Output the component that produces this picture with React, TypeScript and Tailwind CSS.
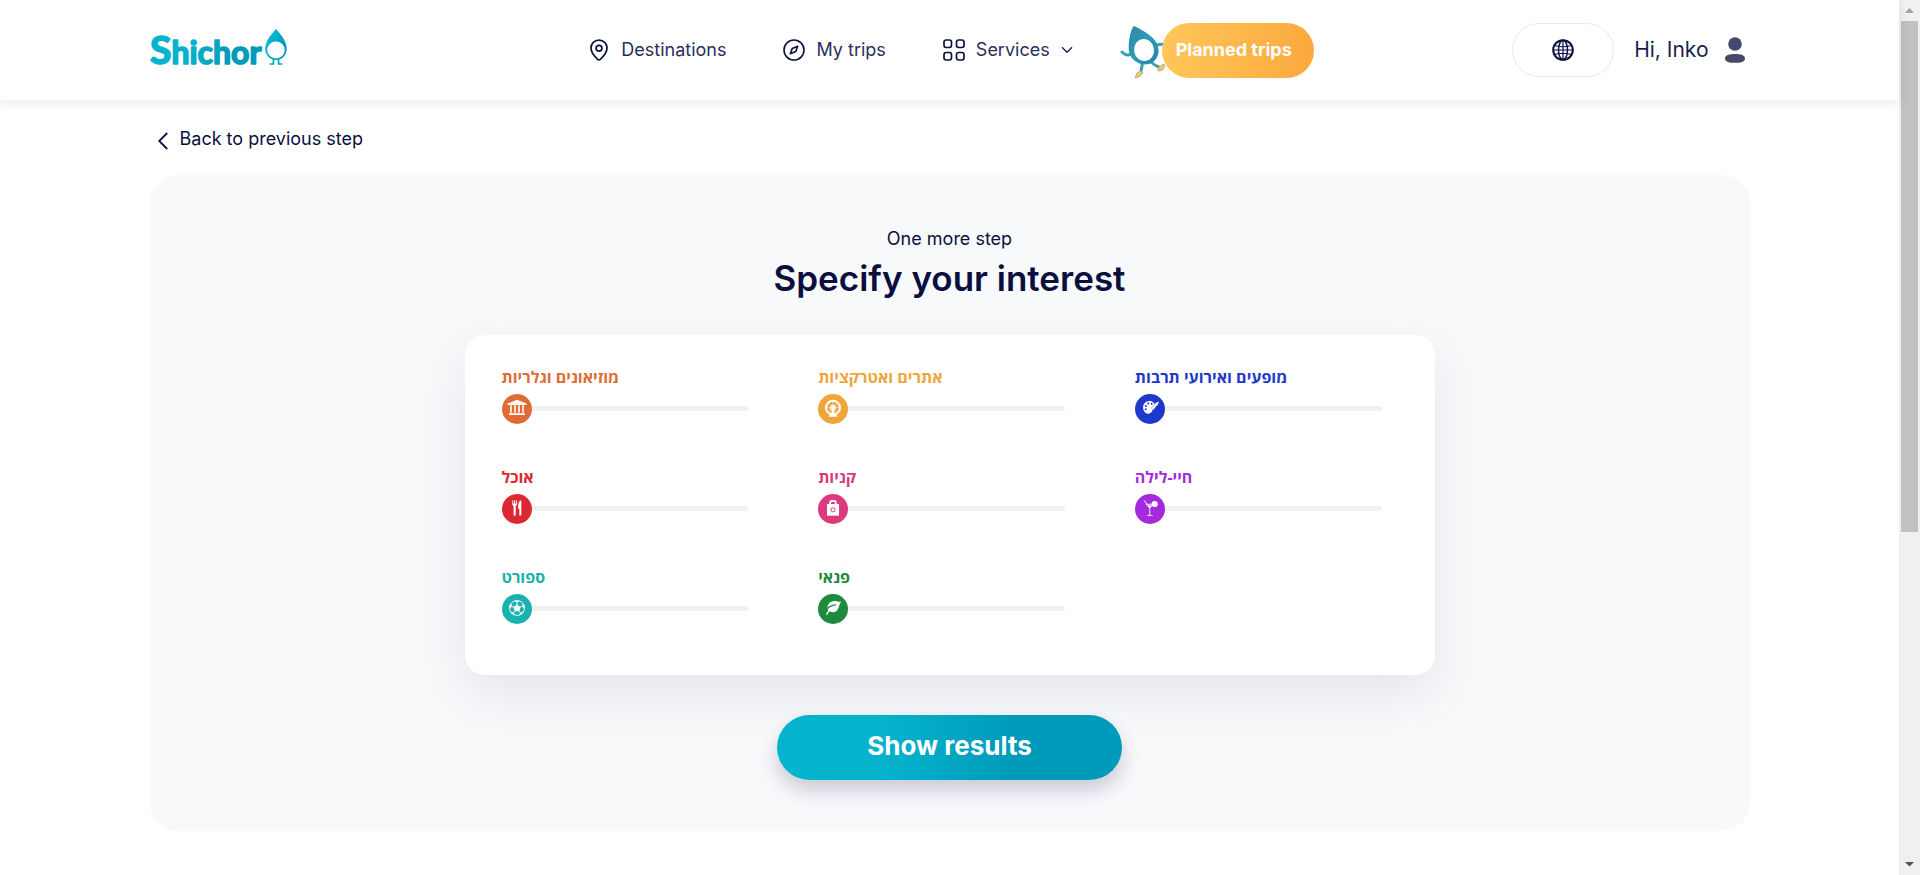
import { useState } from "react";
import type { ReactNode } from "react";

type Interest = {
  id: string;
  label: string;
  text: string;
  thumb: string;
  icon: ReactNode;
};

const interests: Interest[] = [
  {
    id: "museums",
    label: "מוזיאונים וגלריות",
    text: "text-[#df6c34]",
    thumb: "[&::-webkit-slider-thumb]:bg-[#df6c34] [&::-moz-range-thumb]:bg-[#df6c34]",
    icon: (
      <g fill="#fff">
        <path d="M15 6.7 24.4 10.6V11.9H5.6V10.6Z" />
        <path d="M8.2 12.2h1.5v7.6H8.2zM12.2 12.2h1.6v7.6h-1.6zM16.2 12.2h1.6v7.6h-1.6zM20.3 12.2h1.5v7.6h-1.5zM7 20.3h16V22H7z" />
      </g>
    ),
  },
  {
    id: "attractions",
    label: "אתרים ואטרקציות",
    text: "text-[#efa53a]",
    thumb: "[&::-webkit-slider-thumb]:bg-[#efa53a] [&::-moz-range-thumb]:bg-[#efa53a]",
    icon: (
      <g fill="none" stroke="#fff">
        <circle cx="15" cy="14.7" r="7" strokeWidth="1.9" />
        <path d="M15 8v13.4M8.3 14.7h13.4M10.3 10l9.4 9.4M19.7 10l-9.4 9.4" strokeWidth=".6" />
        <circle cx="15" cy="14.7" r="2.7" fill="#fff" stroke="none" />
        <path d="M14 16h2l1 5.5 2.3 1.2v1.1h-8.6v-1.1L13 21.500Z" fill="#fff" stroke="none" />
      </g>
    ),
  },
  {
    id: "culture",
    label: "מופעים ואירועי תרבות",
    text: "text-[#1f38cc]",
    thumb: "[&::-webkit-slider-thumb]:bg-[#1f38cc] [&::-moz-range-thumb]:bg-[#1f38cc]",
    icon: (
      <g>
        <path
          d="M14.500 8c-3.800 0-6.400 2.900-6.400 6.500 0 3.500 2.400 6.300 5.500 6.300 1.800 0 1.100-2 2-3 1.200-1.200 4.800-.2 4.800-3.600C20.400 10.500 18 8 14.500 8Z"
          fill="#fff"
        />
        <g fill="#1f38cc">
          <circle cx="10.700" cy="16.200" r="1" />
          <circle cx="10.800" cy="12.900" r="1" />
          <circle cx="13.300" cy="10.600" r="1" />
          <circle cx="16.700" cy="10.800" r="1" />
        </g>
        <path d="M23 9.700 17.500 16" stroke="#1f38cc" strokeWidth="3" fill="none" />
        <path d="M24 8.600 21 9.800 16.300 15.400 18 16.800 23 11.300Z" fill="#fff" />
        <path d="M15.800 16.200 17.500 17.600C17.200 19.200 16 20 14.600 20.100 15.400 18.800 14.800 17.200 15.800 16.200Z" fill="#fff" />
      </g>
    ),
  },
  {
    id: "food",
    label: "אוכל",
    text: "text-[#da2932]",
    thumb: "[&::-webkit-slider-thumb]:bg-[#da2932] [&::-moz-range-thumb]:bg-[#da2932]",
    icon: (
      <g fill="#fff">
        <path d="M10.300 7.300h.9v3.200h.9V7.300h1v3.200h.9V7.300h.9v3.900c0 .9-.5 1.500-1.200 1.800v9.600h-2.100V13c-.8-.3-1.300-.9-1.300-1.800Z" />
        <path d="M19.300 7.300v15.300h-2v-6.900h-1.100c-.3-3.500.2-7.900 3.100-8.400Z" />
      </g>
    ),
  },
  {
    id: "shopping",
    label: "קניות",
    text: "text-[#dc397e]",
    thumb: "[&::-webkit-slider-thumb]:bg-[#dc397e] [&::-moz-range-thumb]:bg-[#dc397e]",
    icon: (
      <g>
        <path d="M9 11h12v11.700H9Z" fill="#fff" />
        <path d="M12.200 11.500V9.600c0-1 .6-1.600 1.600-1.600h2.400c1 0 1.600.6 1.600 1.600v1.900" fill="none" stroke="#fff" strokeWidth="1.800" />
        <rect x="13.100" y="14.900" width="3.800" height="3.800" rx="1.200" fill="none" stroke="#dc397e" />
      </g>
    ),
  },
  {
    id: "nightlife",
    label: "חיי-לילה",
    text: "text-[#a52add]",
    thumb: "[&::-webkit-slider-thumb]:bg-[#a52add] [&::-moz-range-thumb]:bg-[#a52add]",
    icon: (
      <g>
        <circle cx="19.700" cy="11" r="3.100" fill="#fff" />
        <path d="M9.200 7.500l2.600 3.300" stroke="#fff" strokeWidth="1" />
        <path d="M10.200 10.700h8.500l-3.500 4.600v6.500l2.800.5v.5h-6.300v-.5l2.700-.5v-6.500Z" fill="#fff" />
        <path d="M12 12h4.800" stroke="#a52add" strokeWidth=".7" />
      </g>
    ),
  },
  {
    id: "sport",
    label: "ספורט",
    text: "text-[#1ab2ae]",
    thumb: "[&::-webkit-slider-thumb]:bg-[#1ab2ae] [&::-moz-range-thumb]:bg-[#1ab2ae]",
    icon: (
      <g fill="none" stroke="#fff">
        <circle cx="15" cy="15" r="7.500" strokeWidth=".9" />
        <path d="M15 12l3 2.200-1.100 3.500h-3.800L12 14.200Z" fill="#fff" />
        <path d="M15 12V9.700M18 14.200l2.200-.8M16.900 17.700l1.500 2M13.100 17.700l-1.500 2M12 14.200l-2.200-.8" strokeWidth="1" />
        <path
          d="M12.700 8 15 9.700 17.300 8ZM20.200 13.400l2.100 2 .1-2.900-1.500-1.700ZM18.400 19.700l-.7 2.300 2.900-1.900.4-1.100ZM11.600 19.700l.7 2.300-2.900-1.900-.4-1.100ZM9.800 13.400l-2.100 2-.1-2.900 1.500-1.700Z"
          fill="#fff"
          strokeWidth=".3"
        />
      </g>
    ),
  },
  {
    id: "leisure",
    label: "פנאי",
    text: "text-[#1f893d]",
    thumb: "[&::-webkit-slider-thumb]:bg-[#1f893d] [&::-moz-range-thumb]:bg-[#1f893d]",
    icon: (
      <g>
        <path d="M23.200 8.600C20 9.200 20.300 7.900 16.500 8c-4.600.2-7.500 3-7 8.600l.9 1.200c2.300 1.700 6.400 2.200 8.900-.6 1.700-2 1.600-5.500 3.900-8.600Z" fill="#fff" />
        <path d="M8.600 16.700c1.900-2.600 4.600-4.300 9.200-4.800" fill="none" stroke="#1f893d" strokeWidth="1.200" />
        <path d="M8.600 21.800c.6-1.900 1.500-3.500 3.500-5" fill="none" stroke="#fff" strokeWidth="1.300" />
      </g>
    ),
  },
];

function InterestSlider({ item }: { item: Interest }) {
  const [value, setValue] = useState(0);
  return (
    <div>
      <label htmlFor={item.id} className={`block h-6 text-base leading-6 font-bold ${item.text}`}>
        {item.label}
      </label>
      <div className="relative mt-1 h-[30px]">
        <input
          id={item.id}
          type="range"
          min={0}
          max={100}
          value={value}
          onChange={(e) => setValue(Number(e.target.value))}
          className={`block h-[30px] w-full cursor-pointer appearance-none bg-transparent [&::-webkit-slider-runnable-track]:h-[5px] [&::-webkit-slider-runnable-track]:rounded-full [&::-webkit-slider-runnable-track]:bg-[#f1f1f1] [&::-webkit-slider-thumb]:-mt-3 [&::-webkit-slider-thumb]:size-[30px] [&::-webkit-slider-thumb]:appearance-none [&::-webkit-slider-thumb]:rounded-full [&::-moz-range-track]:h-[5px] [&::-moz-range-track]:rounded-full [&::-moz-range-track]:bg-[#f1f1f1] ${item.thumb}`}
        />
        <svg
          viewBox="0 0 30 30"
          aria-hidden="true"
          className="pointer-events-none absolute top-0 size-[30px]"
          style={{ left: `calc((100% - 30px) * ${value / 100})` }}
        >
          {item.icon}
        </svg>
      </div>
    </div>
  );
}

function Logo() {
  return (
    <svg viewBox="-4 -18 144 80" className="-ml-1 h-20 w-36" role="img" aria-label="Shichor">
      <defs>
        <linearGradient id="wordmark" gradientUnits="userSpaceOnUse" x1="0" y1="10" x2="112" y2="30">
          <stop offset=".35" stopColor="#05b3cd" />
          <stop offset=".75" stopColor="#009aba" />
        </linearGradient>
        <linearGradient id="drop" gradientUnits="userSpaceOnUse" x1="116" y1="10" x2="137" y2="18">
          <stop offset=".3" stopColor="#05b3cd" />
          <stop offset=".8" stopColor="#009aba" />
        </linearGradient>
      </defs>
      <text
        y="36"
        fill="url(#wordmark)"
        stroke="url(#wordmark)"
        strokeWidth="1.600"
        strokeLinejoin="round"
        className="font-['Lato',sans-serif] font-bold"
      >
        <tspan x="0" fontSize="39">S</tspan>
        <tspan fontSize="32">hichor</tspan>
      </text>
      <path
        fill="url(#drop)"
        fillRule="evenodd"
        d="M126 1c1 1.500 9.800 9.500 10.700 18.500.7 7-4.400 12.500-10.700 12.500s-11.400-5.500-10.700-12.500C116.200 10.500 125 2.500 126 1Zm0 12.600a8.800 8.400 0 1 0 0 16.800 8.800 8.400 0 0 0 0-16.800Z"
      />
      <path d="M123.400 31.500v4.500h-3M128.600 31.500v4.500h3" fill="none" stroke="#05a7c4" strokeWidth="1.700" strokeLinecap="round" />
    </svg>
  );
}

function Mascot() {
  return (
    <svg viewBox="0 0 46 56" aria-hidden="true" className="absolute -left-[42px] top-0 h-14 w-[46px]">
      <defs>
        <linearGradient id="body" x1="0" y1="0" x2="1" y2="1">
          <stop offset="0" stopColor="#2789a8" />
          <stop offset=".5" stopColor="#2f9ab6" />
          <stop offset="1" stopColor="#1d86a5" />
        </linearGradient>
      </defs>
      <g fill="none" stroke="#3aa0b8" strokeWidth="3" strokeLinecap="round">
        <path d="M11 31c-3 2-6 1-9-2" />
        <path d="M36 22c3 0 5-1 9-1" />
        <path d="M22 39c1 4-1 6-1 10" />
        <path d="M30 38c3 3 6 5 9 6" />
      </g>
      <path d="M17 50l4-2 2 2-4 4-4 1ZM38 45l5-4 2 1-2 5-5 1Z" fill="#e9c87a" stroke="#c9a45a" strokeWidth=".8" />
      <path d="M14 3c6 3 19 9 23 18 4 9 0 17-8 20-9 2-19-4-20-13C8 19 11 5 14 3Z" fill="url(#body)" />
      <ellipse cx="24" cy="27" rx="10" ry="11" fill="#fff" transform="rotate(-10 24 27)" />
    </svg>
  );
}

function Header() {
  return (
    <header className="relative h-[100px] bg-white shadow-[0_3px_12px_rgba(10,14,60,0.09)]">
      <div className="mx-auto grid h-full max-w-[1600px] grid-cols-[1fr_auto_1fr] items-center">
        <a href="#home" className="justify-self-start">
          <Logo />
        </a>
        <nav className="flex items-center pl-1 text-lg text-[#2b2f5b]">
          <a href="#destinations" className="flex items-center gap-3">
            <svg viewBox="0 0 20 22" className="h-[22px] w-5" fill="none" stroke="#0c1143" strokeWidth="1.700">
              <path d="M10 1.200c-4.600 0-8 3.400-8 7.900 0 4.700 3.700 8.500 6.400 11 .9.900 2.300.9 3.200 0 2.700-2.500 6.400-6.300 6.400-11 0-4.500-3.400-7.900-8-7.900Z" />
              <circle cx="10" cy="9.200" r="2.900" />
            </svg>
            Destinations
          </a>
          <a href="#my-trips" className="ml-[57px] flex items-center gap-[11px]">
            <svg viewBox="0 0 22 22" className="size-[22px]" fill="none" stroke="#0c1143" strokeWidth="1.600">
              <circle cx="11" cy="11" r="10" />
              <path d="M14.700 7.300 12.800 12.400 7.300 14.700 9.200 9.600Z" strokeLinejoin="round" />
            </svg>
            My trips
          </a>
          <button type="button" className="ml-[57px] flex items-center">
            <svg viewBox="0 0 22 22" className="size-[22px]" fill="none" stroke="#0c1143" strokeWidth="1.700">
              <rect x="1" y="1" width="7.500" height="7.500" rx="2.200" />
              <rect x="13.500" y="1" width="7.500" height="7.500" rx="2.200" />
              <rect x="1" y="13.500" width="7.500" height="7.500" rx="2.200" />
              <rect x="13.500" y="13.500" width="7.500" height="7.500" rx="2.200" />
            </svg>
            <span className="ml-[11px]">Services</span>
            <svg viewBox="0 0 12 8" className="ml-[11px] h-2 w-3" fill="none" stroke="#1b1f4e" strokeWidth="1.300">
              <path d="M1 1.300 6 6.300 11 1.300" />
            </svg>
          </button>
          <div className="relative ml-[89px]">
            <Mascot />
            <a
              href="#planned"
              className="relative flex h-[55px] w-[152px] items-center justify-center rounded-full bg-linear-to-r from-[#ffc65a] to-[#fba93d] pr-2 text-lg font-bold text-white"
            >
              Planned trips
            </a>
          </div>
        </nav>
        <div className="flex items-center justify-self-end pr-[5px]">
          <button
            type="button"
            aria-label="Language"
            className="flex h-[54px] w-[102px] items-center justify-center rounded-full border border-[#e7ebf3]"
          >
            <svg viewBox="0 0 22 22" className="size-[22px]" fill="none" stroke="#0b0f3f">
              <circle cx="11" cy="11" r="9.800" strokeWidth="2" />
              <ellipse cx="11" cy="11" rx="4.500" ry="9.800" strokeWidth="1.500" />
              <path d="M11 1v20M2.500 6.500Q11 9 19.500 6.500M2.500 15.500Q11 13 19.500 15.500M1.500 11h19" strokeWidth="1.200" />
            </svg>
          </button>
          <a href="#account" className="ml-5 flex items-center gap-4 text-[21px] text-[#1b1f4e]">
            Hi, Inko
            <svg viewBox="0 0 20 26" className="h-[26px] w-5" fill="#454969" aria-hidden="true">
              <circle cx="10" cy="7" r="6.800" />
              <path d="M10 17c5 0 10 .8 10 4.400S15 25.800 10 25.800 0 25 0 21.400 5 17 10 17Z" />
            </svg>
          </a>
        </div>
      </div>
    </header>
  );
}

function Scrollbar() {
  return (
    <div aria-hidden="true" className="flex w-[21px] shrink-0 flex-col items-center bg-[#f0f0f0]">
      <svg viewBox="0 0 21 21" className="size-[21px] shrink-0">
        <path d="M10.500 8 15 13H6Z" fill="#a3a3a3" />
      </svg>
      <div className="h-[511px] w-[17px] bg-[#c1c1c1]" />
      <svg viewBox="0 0 21 21" className="mt-auto size-[21px] shrink-0">
        <path d="M10.500 12.500 15 8H6Z" fill="#505050" />
      </svg>
    </div>
  );
}

export default function App() {
  return (
    <div className="flex min-h-screen bg-white font-['Inter','Open_Sans',sans-serif] text-[#0b0f3f]">
      <div className="min-w-0 flex-1">
        <Header />
        <main className="mx-auto flex max-w-[1600px] flex-col items-start pb-11">
          <a href="#previous" className="mt-[25px] ml-2 flex h-7 items-center gap-3 text-lg">
            <svg viewBox="0 0 10 18" className="mt-1 h-[18px] w-2.5" fill="none" stroke="#0b0f3f" strokeWidth="1.800">
              <path d="M9.200 1 1.200 9l8 8" />
            </svg>
            Back to previous step
          </a>
          <section className="mt-[22px] flex w-full flex-col items-center rounded-[28px] bg-[#f8f9fb] pt-[50px] pb-[51px]">
            <p className="text-lg leading-7">One more step</p>
            <h1 className="mt-0.5 text-[35px] leading-[46px] font-semibold">Specify your interest</h1>
            <form
              className="mt-[34px] flex w-full flex-col items-center"
              onSubmit={(e) => e.preventDefault()}
            >
              <div className="grid min-h-[340px] w-full max-w-[970px] grid-cols-3 content-start gap-x-[70px] gap-y-[42px] rounded-[20px] bg-white pt-[30px] pr-[53px] pb-[50px] pl-[37px] font-['Open_Sans',sans-serif] shadow-[0_20px_50px_rgba(10,14,60,0.08)]">
                {interests.map((item) => (
                  <InterestSlider key={item.id} item={item} />
                ))}
              </div>
              <button
                type="submit"
                className="mt-10 h-[65px] w-[345px] rounded-full bg-linear-to-r from-[#05b3cd] from-30% to-[#009aba] to-70% pb-1 text-[26px] font-bold text-white shadow-[0_10px_20px_rgba(10,14,60,0.2)]"
              >
                Show results
              </button>
            </form>
          </section>
        </main>
      </div>
      <Scrollbar />
    </div>
  );
}
